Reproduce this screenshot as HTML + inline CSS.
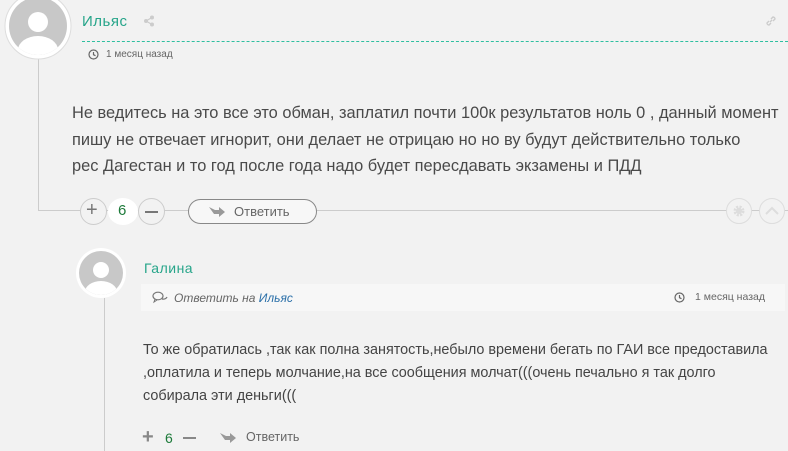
<!DOCTYPE html>
<html><head><meta charset="utf-8"><style>
*{margin:0;padding:0;box-sizing:border-box}
body{width:788px;height:451px;overflow:hidden;background:#f2f2f2;font-family:"Liberation Sans","DejaVu Sans",sans-serif;color:#555;position:relative}
.a{position:absolute;white-space:nowrap}
.circ{position:absolute;border-radius:50%;border:1px solid #ccc;background:#f2f2f2}
</style></head><body>
<div class="a" style="left:38px;top:58px;width:1px;height:152px;background:#ccc"></div>
<div class="a" style="left:38px;top:210px;width:750px;height:1px;background:#ccc"></div>
<div class="a" style="left:104px;top:298px;width:1px;height:153px;background:#ccc"></div>
<svg class="a" style="left:4px;top:-8px" width="68" height="68" viewBox="0 0 68 68">
<circle cx="34" cy="34" r="33" fill="#fff" stroke="#ddd"/>
<clipPath id="c1"><circle cx="34" cy="34" r="29"/></clipPath>
<g clip-path="url(#c1)"><rect width="68" height="68" fill="#c8c8c8"/>
<circle cx="34" cy="30" r="10" fill="#fff"/><ellipse cx="34" cy="58" rx="20" ry="14" fill="#fff"/></g></svg>
<div class="a" style="left:82px;top:13px;font-size:15px;color:#27a58a;letter-spacing:.5px">Ильяс</div>
<svg class="a" style="left:143px;top:15px" width="12" height="12" viewBox="0 0 12 12" fill="#ccc"><circle cx="9" cy="2.5" r="2"/><circle cx="3" cy="6" r="2"/><circle cx="9" cy="9.5" r="2"/><path d="M3 6L9 2.5M3 6L9 9.5" stroke="#ccc" stroke-width="1.2"/></svg>
<svg class="a" style="left:765px;top:15px" width="12" height="12" viewBox="0 0 12 12"><path d="M5 7l2-2M4 6L2 8a2 2 0 0 0 2 2l2-2M8 6l2-2a2 2 0 0 0-2-2L6 4" stroke="#ccc" stroke-width="1.4" fill="none"/></svg>
<div class="a" style="left:82px;top:41px;width:706px;border-top:1px dashed #2fbfa0"></div>
<svg class="a" style="left:88px;top:49px" width="11" height="11" viewBox="0 0 11 11"><circle cx="5.5" cy="5.5" r="4.5" fill="none" stroke="#666" stroke-width="1.2"/><path d="M5.5 3v2.7l2 1" stroke="#666" stroke-width="1.2" fill="none"/></svg>
<div class="a" style="left:106px;top:49px;font-size:10px;color:#666">1 месяц назад</div>
<div class="a" style="left:72px;top:100px;font-size:16.4px;line-height:26.5px;color:#4a4a4a">Не ведитесь на это все это обман, заплатил почти 100к результатов ноль 0 , данный момент<br>пишу не отвечает игнорит, они делает не отрицаю но но ву будут действительно только<br>рес Дагестан и то год после года надо будет пересдавать экзамены и ПДД</div>
<div class="circ" style="left:80px;top:198px;width:27px;height:27px"></div>
<div class="a" style="left:86px;top:199px;font-size:20px;color:#777">+</div>
<div class="a" style="left:108px;top:198px;width:30px;height:27px;border-radius:50%;background:#fff"></div>
<div class="a" style="left:118px;top:202px;font-size:15px;color:#1d7a3a">6</div>
<div class="circ" style="left:138px;top:198px;width:27px;height:27px"></div>
<div class="a" style="left:145px;top:211px;width:13px;height:2px;background:#777"></div>
<div class="a" style="left:188px;top:199px;width:129px;height:25px;border:1px solid #888;border-radius:13px;background:#f7f7f7"></div>
<svg class="a" style="left:209px;top:206px" width="16" height="11" viewBox="0 0 16 11"><path d="M0 1l6 3h4V1l6 5-6 5V8H5z" fill="#999"/></svg>
<div class="a" style="left:234px;top:204px;font-size:13px;color:#666">Ответить</div>
<div class="circ" style="left:726px;top:198px;width:26px;height:26px;border-color:#ddd"></div>
<svg class="a" style="left:733px;top:205px" width="12" height="12" viewBox="0 0 12 12"><circle cx="6" cy="6" r="4" fill="none" stroke="#ddd" stroke-width="3" stroke-dasharray="2 1.2"/><circle cx="6" cy="6" r="3" fill="#ddd"/></svg>
<div class="circ" style="left:759px;top:198px;width:26px;height:26px;border-color:#ddd"></div>
<svg class="a" style="left:765px;top:206px" width="14" height="9" viewBox="0 0 14 9"><path d="M1 8l6-6 6 6" stroke="#ddd" stroke-width="2" fill="none"/></svg>
<svg class="a" style="left:76px;top:248px" width="50" height="50" viewBox="0 0 50 50">
<circle cx="25" cy="25" r="25" fill="#fff"/>
<clipPath id="c2"><circle cx="25" cy="25" r="22"/></clipPath>
<g clip-path="url(#c2)"><rect width="50" height="50" fill="#c8c8c8"/>
<circle cx="25" cy="22" r="8" fill="#fff"/><ellipse cx="25" cy="44" rx="16" ry="11" fill="#fff"/></g></svg>
<div class="a" style="left:144px;top:260px;font-size:14px;color:#27a58a;letter-spacing:.5px">Галина</div>
<div class="a" style="left:141px;top:284px;width:644px;height:27px;background:#f7f7f7"></div>
<svg class="a" style="left:152px;top:291px" width="16" height="13" viewBox="0 0 16 13"><ellipse cx="6" cy="5" rx="5" ry="3.8" fill="none" stroke="#777" stroke-width="1.2"/><path d="M10 8a4 3 0 0 0 5-2" stroke="#777" fill="none" stroke-width="1.2"/><path d="M3 8l-1 3 3-2" fill="none" stroke="#777"/></svg>
<div class="a" style="left:174px;top:291px;font-size:12px;font-style:italic;color:#666">Ответить на <span style="color:#2a6fa8">Ильяс</span></div>
<svg class="a" style="left:674px;top:292px" width="11" height="11" viewBox="0 0 11 11"><circle cx="5.5" cy="5.5" r="4.5" fill="none" stroke="#666" stroke-width="1.2"/><path d="M5.5 3v2.7l2 1" stroke="#666" stroke-width="1.2" fill="none"/></svg>
<div class="a" style="left:695px;top:291px;font-size:10.5px;color:#666">1 месяц назад</div>
<div class="a" style="left:143px;top:339px;font-size:14.4px;line-height:23px;color:#444">То же обратилась ,так как полна занятость,небыло времени бегать по ГАИ все предоставила<br>,оплатила и теперь молчание,на все сообщения молчат(((очень печально я так долго<br>собирала эти деньги(((</div>
<div class="a" style="left:142px;top:426px;font-size:20px;color:#888;font-weight:bold">+</div>
<div class="a" style="left:165px;top:430px;font-size:14px;color:#1d7a3a">6</div>
<div class="a" style="left:183px;top:437px;width:13px;height:2px;background:#888"></div>
<svg class="a" style="left:220px;top:432px" width="16" height="11" viewBox="0 0 16 11"><path d="M0 1l6 3h4V1l6 5-6 5V8H5z" fill="#999"/></svg>
<div class="a" style="left:246px;top:430px;font-size:12.5px;color:#666">Ответить</div>
</body></html>
